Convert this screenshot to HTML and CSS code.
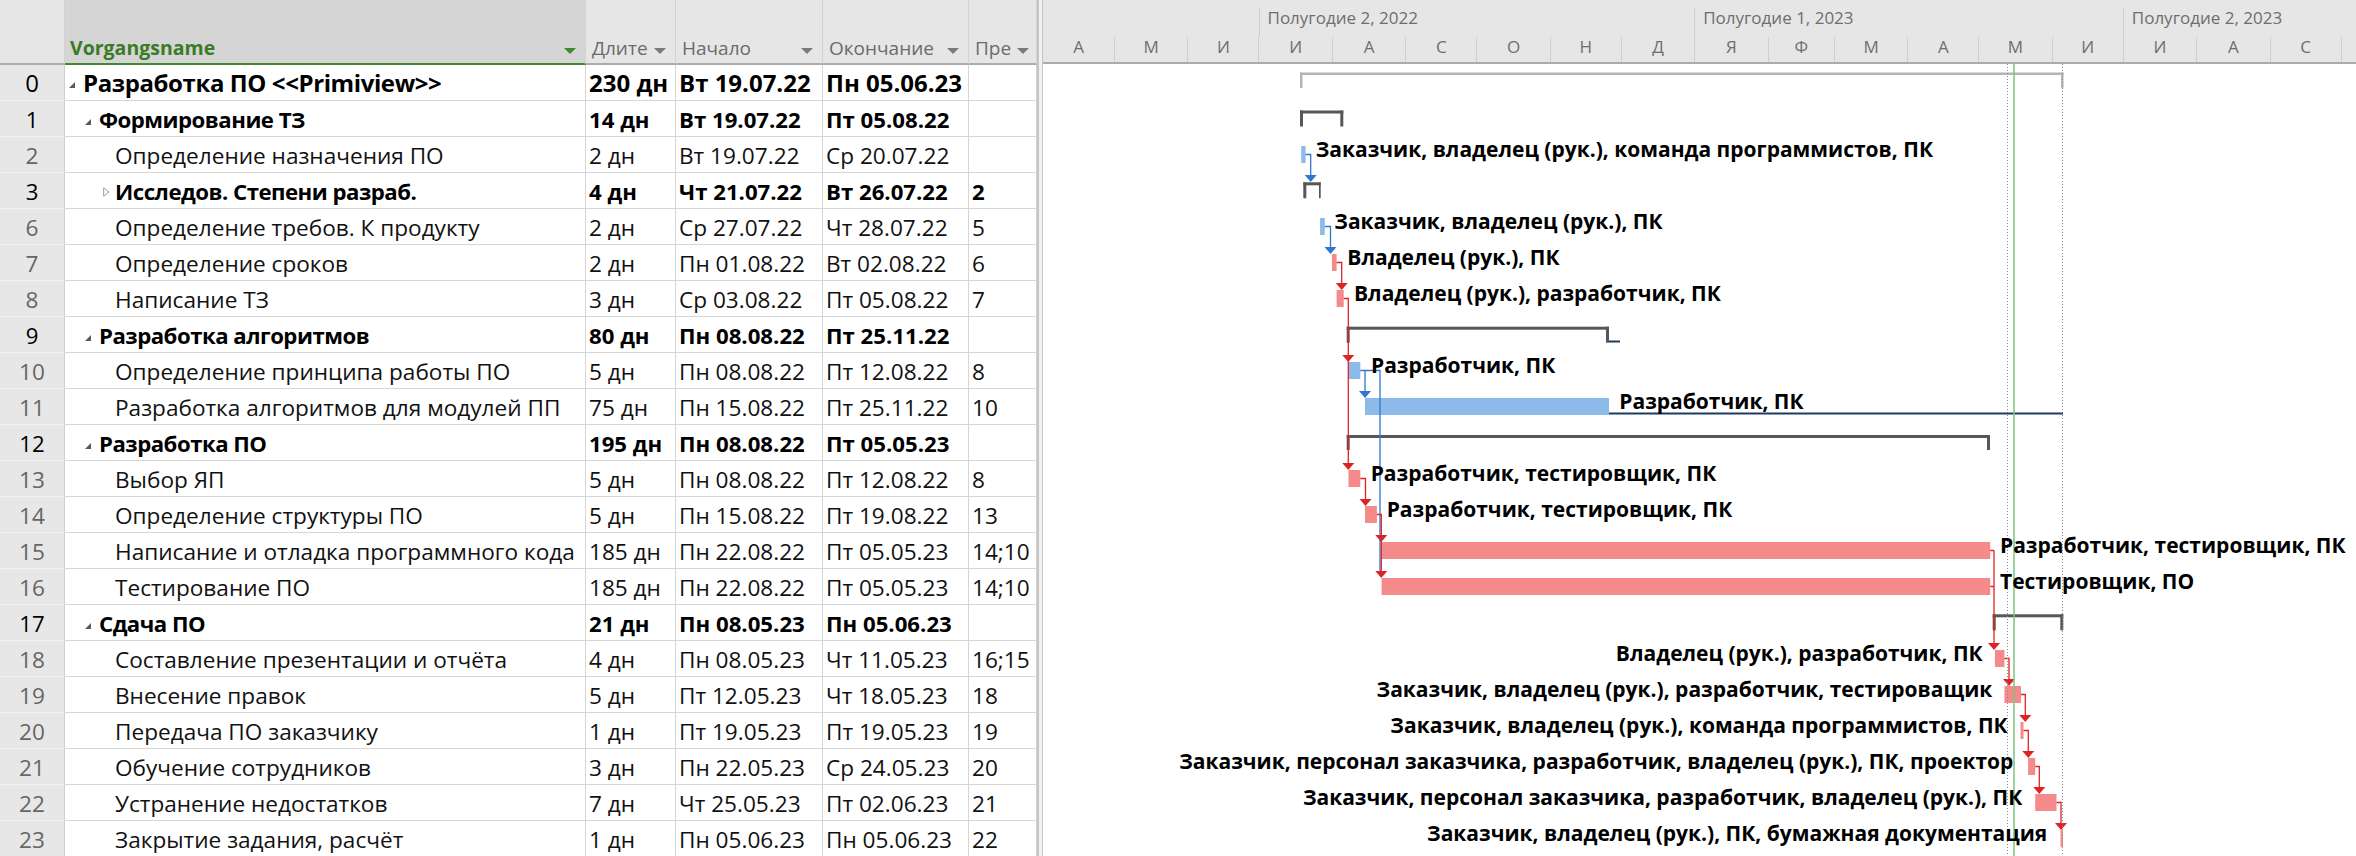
FILE: index.html
```html
<!DOCTYPE html>
<html lang="ru">
<head>
<meta charset="utf-8">
<title>Gantt</title>
<link rel="stylesheet" href="styles.css">
</head>
<body>
<div class="app">
  <div class="sheet">
    <div class="row head">
      <div class="c num"></div>
      <div class="c name sel"><span class="lbl">Vorgangsname</span><i class="dd"></i></div>
      <div class="c"><span class="lbl">Длите</span><i class="dd"></i></div>
      <div class="c"><span class="lbl">Начало</span><i class="dd"></i></div>
      <div class="c"><span class="lbl">Окончание</span><i class="dd"></i></div>
      <div class="c"><span class="lbl clip">Пре</span><i class="dd"></i></div>
    </div>

    <div class="row sum top">
      <div class="c num">0</div>
      <div class="c name l0"><span class="tg exp"></span><span class="t">Разработка ПО &lt;&lt;Primiview&gt;&gt;</span></div>
      <div class="c">230 дн</div><div class="c">Вт 19.07.22</div><div class="c">Пн 05.06.23</div><div class="c"></div>
    </div>
    <div class="row sum">
      <div class="c num">1</div>
      <div class="c name l1"><span class="tg exp"></span><span class="t">Формирование ТЗ</span></div>
      <div class="c">14 дн</div><div class="c">Вт 19.07.22</div><div class="c">Пт 05.08.22</div><div class="c"></div>
    </div>
    <div class="row">
      <div class="c num">2</div>
      <div class="c name l2"><span class="tg"></span><span class="t">Определение назначения ПО</span></div>
      <div class="c">2 дн</div><div class="c">Вт 19.07.22</div><div class="c">Ср 20.07.22</div><div class="c"></div>
    </div>
    <div class="row sum">
      <div class="c num">3</div>
      <div class="c name l2"><span class="tg col"><svg width="7" height="10" viewBox="0 0 7 10"><polygon points="0.7,0.7 6,5 0.7,9.3" fill="none" stroke="#9a9a9a" stroke-width="1"/></svg></span><span class="t">Исследов. Степени разраб.</span></div>
      <div class="c">4 дн</div><div class="c">Чт 21.07.22</div><div class="c">Вт 26.07.22</div><div class="c">2</div>
    </div>
    <div class="row">
      <div class="c num">6</div>
      <div class="c name l2"><span class="tg"></span><span class="t">Определение требов. К продукту</span></div>
      <div class="c">2 дн</div><div class="c">Ср 27.07.22</div><div class="c">Чт 28.07.22</div><div class="c">5</div>
    </div>
    <div class="row">
      <div class="c num">7</div>
      <div class="c name l2"><span class="tg"></span><span class="t">Определение сроков</span></div>
      <div class="c">2 дн</div><div class="c">Пн 01.08.22</div><div class="c">Вт 02.08.22</div><div class="c">6</div>
    </div>
    <div class="row">
      <div class="c num">8</div>
      <div class="c name l2"><span class="tg"></span><span class="t">Написание ТЗ</span></div>
      <div class="c">3 дн</div><div class="c">Ср 03.08.22</div><div class="c">Пт 05.08.22</div><div class="c">7</div>
    </div>
    <div class="row sum">
      <div class="c num">9</div>
      <div class="c name l1"><span class="tg exp"></span><span class="t">Разработка алгоритмов</span></div>
      <div class="c">80 дн</div><div class="c">Пн 08.08.22</div><div class="c">Пт 25.11.22</div><div class="c"></div>
    </div>
    <div class="row">
      <div class="c num">10</div>
      <div class="c name l2"><span class="tg"></span><span class="t">Определение принципа работы ПО</span></div>
      <div class="c">5 дн</div><div class="c">Пн 08.08.22</div><div class="c">Пт 12.08.22</div><div class="c">8</div>
    </div>
    <div class="row">
      <div class="c num">11</div>
      <div class="c name l2"><span class="tg"></span><span class="t">Разработка алгоритмов для модулей ПП</span></div>
      <div class="c">75 дн</div><div class="c">Пн 15.08.22</div><div class="c">Пт 25.11.22</div><div class="c">10</div>
    </div>
    <div class="row sum">
      <div class="c num">12</div>
      <div class="c name l1"><span class="tg exp"></span><span class="t">Разработка ПО</span></div>
      <div class="c">195 дн</div><div class="c">Пн 08.08.22</div><div class="c">Пт 05.05.23</div><div class="c"></div>
    </div>
    <div class="row">
      <div class="c num">13</div>
      <div class="c name l2"><span class="tg"></span><span class="t">Выбор ЯП</span></div>
      <div class="c">5 дн</div><div class="c">Пн 08.08.22</div><div class="c">Пт 12.08.22</div><div class="c">8</div>
    </div>
    <div class="row">
      <div class="c num">14</div>
      <div class="c name l2"><span class="tg"></span><span class="t">Определение структуры ПО</span></div>
      <div class="c">5 дн</div><div class="c">Пн 15.08.22</div><div class="c">Пт 19.08.22</div><div class="c">13</div>
    </div>
    <div class="row">
      <div class="c num">15</div>
      <div class="c name l2"><span class="tg"></span><span class="t">Написание и отладка программного кода</span></div>
      <div class="c">185 дн</div><div class="c">Пн 22.08.22</div><div class="c">Пт 05.05.23</div><div class="c">14;10</div>
    </div>
    <div class="row">
      <div class="c num">16</div>
      <div class="c name l2"><span class="tg"></span><span class="t">Тестирование ПО</span></div>
      <div class="c">185 дн</div><div class="c">Пн 22.08.22</div><div class="c">Пт 05.05.23</div><div class="c">14;10</div>
    </div>
    <div class="row sum">
      <div class="c num">17</div>
      <div class="c name l1"><span class="tg exp"></span><span class="t">Сдача ПО</span></div>
      <div class="c">21 дн</div><div class="c">Пн 08.05.23</div><div class="c">Пн 05.06.23</div><div class="c"></div>
    </div>
    <div class="row">
      <div class="c num">18</div>
      <div class="c name l2"><span class="tg"></span><span class="t">Составление презентации и отчёта</span></div>
      <div class="c">4 дн</div><div class="c">Пн 08.05.23</div><div class="c">Чт 11.05.23</div><div class="c">16;15</div>
    </div>
    <div class="row">
      <div class="c num">19</div>
      <div class="c name l2"><span class="tg"></span><span class="t">Внесение правок</span></div>
      <div class="c">5 дн</div><div class="c">Пт 12.05.23</div><div class="c">Чт 18.05.23</div><div class="c">18</div>
    </div>
    <div class="row">
      <div class="c num">20</div>
      <div class="c name l2"><span class="tg"></span><span class="t">Передача ПО заказчику</span></div>
      <div class="c">1 дн</div><div class="c">Пт 19.05.23</div><div class="c">Пт 19.05.23</div><div class="c">19</div>
    </div>
    <div class="row">
      <div class="c num">21</div>
      <div class="c name l2"><span class="tg"></span><span class="t">Обучение сотрудников</span></div>
      <div class="c">3 дн</div><div class="c">Пн 22.05.23</div><div class="c">Ср 24.05.23</div><div class="c">20</div>
    </div>
    <div class="row">
      <div class="c num">22</div>
      <div class="c name l2"><span class="tg"></span><span class="t">Устранение недостатков</span></div>
      <div class="c">7 дн</div><div class="c">Чт 25.05.23</div><div class="c">Пт 02.06.23</div><div class="c">21</div>
    </div>
    <div class="row">
      <div class="c num">23</div>
      <div class="c name l2"><span class="tg"></span><span class="t">Закрытие задания, расчёт</span></div>
      <div class="c">1 дн</div><div class="c">Пн 05.06.23</div><div class="c">Пн 05.06.23</div><div class="c">22</div>
    </div>
  </div>

  <div class="split"></div>

  <div class="gantt">
    <div class="tscale">
      <div class="tier t1">
        <div class="hy first" style="width:215.5px"></div>
        <div class="hy" style="width:435.7px">Полугодие 2, 2022</div>
        <div class="hy" style="width:428.6px">Полугодие 1, 2023</div>
        <div class="hy rest">Полугодие 2, 2023</div>
      </div>
      <div class="tier t2">
        <div class="mo first" style="width:71.04px">А</div>
        <div class="mo" style="width:73.41px">М</div>
        <div class="mo" style="width:71.04px">И</div>
        <div class="mo" style="width:73.41px">И</div>
        <div class="mo" style="width:73.41px">А</div>
        <div class="mo" style="width:71.04px">С</div>
        <div class="mo" style="width:73.41px">О</div>
        <div class="mo" style="width:71.04px">Н</div>
        <div class="mo" style="width:73.41px">Д</div>
        <div class="mo" style="width:73.41px">Я</div>
        <div class="mo" style="width:66.30px">Ф</div>
        <div class="mo" style="width:73.41px">М</div>
        <div class="mo" style="width:71.04px">А</div>
        <div class="mo" style="width:73.41px">М</div>
        <div class="mo" style="width:71.04px">И</div>
        <div class="mo" style="width:73.41px">И</div>
        <div class="mo" style="width:73.41px">А</div>
        <div class="mo" style="width:71.04px">С</div>
        <div class="mo rest"></div>
      </div>
    </div>

    <svg class="chart" width="1313" height="792" viewBox="0 0 1313 792">
      <g class="psum">
        <rect x="257" y="8.5" width="763.5" height="2.5"/>
        <rect x="257" y="8.5" width="2.5" height="15.5"/>
        <rect x="1018" y="8.5" width="2.5" height="15.5"/>
      </g>
      <g class="sumbar">
        <rect x="257" y="46.5" width="43.3" height="3"/>
        <rect x="257" y="46.5" width="3" height="16"/>
        <rect x="297.3" y="46.5" width="3" height="16"/>

        <rect x="260.3" y="118.3" width="17.4" height="3"/>
        <rect x="260.3" y="118.3" width="3" height="16"/>
        <rect x="276" y="118.3" width="1.7" height="16"/>

        <rect x="303.7" y="262.7" width="262.3" height="3"/>
        <rect x="303.7" y="262.7" width="3" height="16"/>
        <rect x="563" y="262.7" width="3" height="16"/>

        <rect x="303.7" y="371" width="643.3" height="3"/>
        <rect x="303.7" y="371" width="3" height="15"/>
        <rect x="944" y="371" width="3" height="15"/>

        <rect x="949.7" y="550.3" width="70.6" height="3"/>
        <rect x="949.7" y="550.3" width="3" height="16"/>
        <rect x="1017.3" y="550.3" width="3" height="16"/>
      </g>
      <rect class="slack" x="566" y="276.5" width="11" height="2"/>
      <g class="bb">
        <rect x="258.2" y="82" width="4.4" height="17"/>
        <rect x="277.1" y="154" width="4.7" height="17"/>
        <rect x="305.5" y="298" width="11.8" height="17"/>
        <rect x="322" y="334" width="244" height="17"/>
      </g>
      <rect class="slack" x="566" y="348.5" width="454" height="2"/>
      <g class="rb">
        <rect x="288.9" y="190" width="4.7" height="17"/>
        <rect x="293.6" y="226" width="7.1" height="17"/>
        <rect x="305.5" y="406" width="11.8" height="17"/>
        <rect x="322" y="442" width="11.9" height="17"/>
        <rect x="338.6" y="478" width="608.6" height="17"/>
        <rect x="338.6" y="514" width="608.6" height="17"/>
        <rect x="951.9" y="586" width="9.5" height="17"/>
        <rect x="961.4" y="622" width="16.6" height="17"/>
        <rect x="977.5" y="658" width="3" height="17"/>
        <rect x="985.1" y="694" width="7.1" height="17"/>
        <rect x="992.2" y="730" width="21.3" height="17"/>
        <rect x="1017.5" y="766" width="2.5" height="17"/>
      </g>
      <g class="lk blue">
        <path d="M262.6 90.5 H267.7 V112"/>
        <path d="M281.8 162.5 H287.5 V184"/>
        <path d="M317.3 306.5 H337 V508 M322 306.5 V328"/>
      </g>
      <g class="ah blue">
        <polygon points="261.7,111 273.7,111 267.7,118"/>
        <polygon points="281.5,183 293.5,183 287.5,190"/>
        <polygon points="316,327 328,327 322,334"/>
      </g>
      <g class="lk red">
        <path d="M293.6 198.5 H298.7 V220"/>
        <path d="M300.7 234.5 H305.3 V400"/>
        <path d="M317.3 414.5 H322.5 V436"/>
        <path d="M333.9 450.5 H338.3 V508"/>
        <path d="M947.2 486.5 H951 M947.2 522.5 H951 M951 486.5 V580"/>
        <path d="M961.4 594.5 H966 V616"/>
        <path d="M978 630.5 H982.3 V652"/>
        <path d="M980.5 666.5 H985.3 V688"/>
        <path d="M992.2 702.5 H996.3 V724"/>
        <path d="M1013.5 738.5 H1018 V760"/>
      </g>
      <g class="ah red">
        <polygon points="292.7,219 304.7,219 298.7,226"/>
        <polygon points="299.3,291 311.3,291 305.3,298"/>
        <polygon points="299.3,399 311.3,399 305.3,406"/>
        <polygon points="316.5,435 328.5,435 322.5,442"/>
        <polygon points="332.3,471 344.3,471 338.3,478"/>
        <polygon points="332.3,507 344.3,507 338.3,514"/>
        <polygon points="945,579 957,579 951,586"/>
        <polygon points="960,615 972,615 966,622"/>
        <polygon points="976.3,651 988.3,651 982.3,658"/>
        <polygon points="979.3,687 991.3,687 985.3,694"/>
        <polygon points="990.3,723 1002.3,723 996.3,730"/>
        <polygon points="1012,759 1024,759 1018,766"/>
      </g>
      <line class="dot" x1="964.5" y1="0" x2="964.5" y2="792"/>
      <line class="dot" x1="1019.5" y1="0" x2="1019.5" y2="792"/>
      <line class="today" x1="971" y1="0" x2="971" y2="792"/>
      <g class="lb">
        <text x="272.7" y="93">Заказчик, владелец (рук.), команда программистов, ПК</text>
        <text x="291.3" y="165">Заказчик, владелец (рук.), ПК</text>
        <text x="304.3" y="201">Владелец (рук.), ПК</text>
        <text x="311" y="237">Владелец (рук.), разработчик, ПК</text>
        <text x="328" y="309">Разработчик, ПК</text>
        <text x="576.3" y="345">Разработчик, ПК</text>
        <text x="327.7" y="417">Разработчик, тестировщик, ПК</text>
        <text x="343.7" y="453">Разработчик, тестировщик, ПК</text>
        <text x="957" y="489">Разработчик, тестировщик, ПК</text>
        <text x="957" y="525">Тестировщик, ПО</text>
      </g>
      <g class="lb end">
        <text x="939.7" y="597">Владелец (рук.), разработчик, ПК</text>
        <text x="949.3" y="633">Заказчик, владелец (рук.), разработчик, тестироващик</text>
        <text x="964.7" y="669">Заказчик, владелец (рук.), команда программистов, ПК</text>
        <text x="970.3" y="705">Заказчик, персонал заказчика, разработчик, владелец (рук.), ПК, проектор</text>
        <text x="979.3" y="741">Заказчик, персонал заказчика, разработчик, владелец (рук.), ПК</text>
        <text x="1004.3" y="777">Заказчик, владелец (рук.), ПК, бумажная документация</text>
      </g>
    </svg>
  </div>
</div>
</body>
</html>
```

FILE: styles.css
```css
* { box-sizing: border-box; margin: 0; padding: 0; }
html, body { width: 2356px; height: 856px; overflow: hidden; background: #fff; }
body { font-family: "Open Sans", "Noto Sans", sans-serif; color: #000; }

.app { display: flex; height: 856px; }

/* ---------- sheet ---------- */
.sheet { width: 1037px; flex: none; display: flex; flex-direction: column; }
.row {
  display: grid;
  grid-template-columns: 65px 521px 90px 147px 146px 68px;
  height: 36px;
  flex: none;
  font-size: 22.6px;
}
.c {
  display: flex;
  align-items: center;
  padding: 2px 0 0 3px;
  border-right: 1px solid #d6d6d6;
  border-bottom: 1px solid #d6d6d6;
  white-space: nowrap;
  overflow: hidden;
  color: #111;
}
.c.num {
  justify-content: center;
  padding-left: 0;
  background: #e7e7e7;
  color: #666;
  font-weight: 400;
  border-right: 1px solid #cfcfcf;
  border-bottom: 1px solid #f3f3f3;
}
.row.sum { font-weight: 700; font-size: 22.2px; }
.row.sum .c { color: #000; }
.row.sum .name .t { letter-spacing: -0.5px; }
.row.top { font-size: 24px; }
.row.top .c { padding-top: 0; }
.row.top .name .t { letter-spacing: -0.4px; }

.name { padding-left: 0; }
.name.l0 { padding-left: 4px; }
.name.l1 { padding-left: 20px; }
.name.l2 { padding-left: 36px; }
.tg { flex: none; width: 14px; height: 10px; display: flex; align-items: flex-end; margin-top: 1px; }
.tg.exp::before {
  content: "";
  width: 0; height: 0;
  border-left: 6px solid transparent;
  border-bottom: 6px solid #5a5a5a;
}
.tg.col { align-items: center; padding-left: 2px; }
.tg.col svg { display: block; }

/* header */
.row.head { height: 65px; font-size: 19px; font-weight: 400; }
.head .c {
  background: #e6e6e6;
  color: #6b6b6b;
  align-items: flex-end;
  padding: 0 0 3px 6px;
  line-height: 24px;
  border-right: 1px solid #d2d2d2;
  border-bottom: 2px solid #ababab;
}
.head .c.num { border-bottom-color: #ababab; border-right: 1px solid #d2d2d2; }
.head .c.sel {
  background: #d5d5d5;
  color: #3b7a27;
  font-weight: 700;
  font-size: 19.5px;
  padding-left: 5px;
  border-bottom: 2px solid #3f8a2e;
}
.head .lbl { flex: 1; white-space: nowrap; }
.head .lbl.clip { flex: 0 0 40px; overflow: hidden; }
.dd {
  flex: none;
  width: 0; height: 0;
  border-left: 6px solid transparent;
  border-right: 6px solid transparent;
  border-top: 6px solid #7a7a7a;
  margin: 0 9px 6px 2px;
}
.sel .dd { border-top-color: #3f8a2e; }

/* splitter */
.split {
  width: 6px;
  flex: none;
  background: #f2f2f2;
  border-left: 2px solid #c4c4c4;
  border-right: 1px solid #c4c4c4;
}

/* ---------- gantt ---------- */
.gantt { flex: 1; display: flex; flex-direction: column; min-width: 0; overflow: hidden; }
.tscale {
  height: 64px;
  flex: none;
  background: #e6e6e6;
  border-bottom: 2px solid #ababab;
  color: #6e6e6e;
}
.tier { display: flex; }
.t1 { height: 37px; font-size: 17px; }
.t2 { height: 25px; font-size: 17px; }
.hy { flex: none; position: relative; padding-left: 9px; line-height: 36px; white-space: nowrap; }
.hy::before {
  content: "";
  position: absolute;
  left: 0; top: 7px; bottom: 0;
  border-left: 1px solid #cfcfcf;
}
.hy.first::before { display: none; }
.hy.rest { flex: 1; }
.mo {
  flex: none;
  text-align: center;
  line-height: 20px;
  border-left: 1px solid #d0d0d0;
}
.mo.first { border-left: none; }
.mo.rest { flex: 1; }

.chart { display: block; flex: none; }
.psum rect { fill: #b5b5b5; }
.sumbar rect { fill: #575757; }
.bb rect { fill: #8cbbea; }
.rb rect { fill: #f58a8a; }
.slack { fill: #1f3a64; }
.lk path { fill: none; stroke-width: 1.3; }
.lk.blue path { stroke: #2f77cf; }
.lk.red path { stroke: #dd2424; }
.ah.blue polygon { fill: #2f77cf; }
.ah.red polygon { fill: #dd2424; }
.dot { stroke: #8a8a8a; stroke-width: 1; stroke-dasharray: 1 2; }
.today { stroke: #7cc27c; stroke-width: 1.5; }
.lb text { font-family: "Open Sans", "Noto Sans", sans-serif; font-weight: 700; font-size: 21px; fill: #000; }
.lb.end text { text-anchor: end; }
```
